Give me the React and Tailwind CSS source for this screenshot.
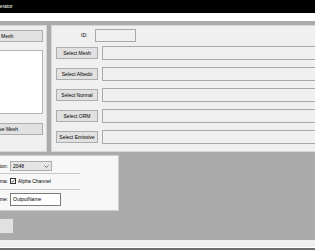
import React from 'react'

function WinButton({ children, className = '' }) {
  return (
    <div className={`flex items-center justify-center bg-[#e1e1e1] border border-[#adadad] whitespace-nowrap ${className}`}>
      {children}
    </div>
  )
}

function App() {
  const rows = ['Select Mesh', 'Select Albedo', 'Select Normal', 'Select ORM', 'Select Emissive']

  return (
    <div className="w-[315px] h-[250px] overflow-hidden bg-white text-[5px] leading-none text-black font-['Liberation_Sans',Arial,sans-serif]">
      <div className="-ml-[43px] w-[378px] h-full flex flex-col">
        <div className="h-[13px] bg-black text-white flex items-center pl-[14px] whitespace-nowrap">Material Generator</div>
        <div className="h-[8px] bg-white" />

        <div className="h-[219px] bg-[#ababab] pt-[4px] flex flex-col">
          <div className="flex gap-[4px] h-[127px]">
            <div className="w-[90px] bg-[#f0f0f0] border border-[#d7d7d7] flex flex-col pl-[3px] pt-[4px]">
              <WinButton className="w-[82px] h-[12px]">Add Mesh</WinButton>
              <div className="w-[82px] h-[64px] mt-[8px] bg-white border border-[#b4b4b4]" />
              <WinButton className="w-[82px] h-[12px] mt-[9px]">Remove Mesh</WinButton>
            </div>

            <div className="flex-1 bg-[#f0f0f0] border border-[#d7d7d7] flex flex-col pl-[4px] pt-[3px]">
              <div className="flex items-center h-[13px] pl-[25px]">
                <span className="w-[14px]">ID:</span>
                <div className="w-[41px] h-[13px] bg-[#f0f0f0] border border-[#a9a9a9]" />
              </div>
              <div className="flex flex-col gap-[7px] mt-[4px]">
                {rows.map((r) => (
                  <div key={r} className="flex items-center gap-[4px] h-[14px]">
                    <WinButton className="w-[42px] h-[12px]">{r}</WinButton>
                    <div className="flex-1 h-[14px] bg-[#f0f0f0] border border-[#a9a9a9] border-r-0" />
                  </div>
                ))}
              </div>
            </div>
          </div>

          <div className="w-[162px] h-[56px] mt-[3px] bg-[#f7f7f7] border border-[#d0d0d0] flex flex-col pt-[5px]">
            <div className="flex items-center h-[10px]">
              <span className="w-[51px] text-right pr-[1px]">Resolution:</span>
              <div className="ml-[1px] w-[42px] h-[10px] bg-[#e5e5e5] border border-[#acacac] flex items-center justify-between px-[2px]">
                <span>2048</span>
                <svg width="5" height="3" viewBox="0 0 5 3">
                  <path d="M0.5 0.5 L2.5 2.5 L4.5 0.5" fill="none" stroke="#555" strokeWidth="0.8" />
                </svg>
              </div>
            </div>
            <div className="ml-[4px] w-[118px] h-px bg-[#c8c8c8] mt-[2px]" />
            <div className="flex items-center h-[6px] mt-[4px]">
              <span className="w-[51px] text-right pr-[1px]">Schema:</span>
              <div className="ml-[1px] w-[6px] h-[6px] bg-white border border-[#333] flex items-center justify-center">
                <svg width="4" height="4" viewBox="0 0 4 4">
                  <path d="M0.5 2 L1.6 3.2 L3.6 0.6" fill="none" stroke="#222" strokeWidth="0.7" />
                </svg>
              </div>
              <span className="ml-[2px]">Alpha Channel</span>
            </div>
            <div className="ml-[4px] w-[118px] h-px bg-[#c8c8c8] mt-[5px]" />
            <div className="flex items-center h-[13px] mt-[3px]">
              <span className="w-[51px] text-right pr-[1px]">Name:</span>
              <div className="ml-[1px] w-[51px] h-[13px] bg-white border border-[#7a7a7a] flex items-center pl-[2px]">OutputName</div>
            </div>
          </div>

          <WinButton className="w-[53px] h-[16px] mt-[7px] ml-[4px]">Generate</WinButton>
        </div>

        <div className="h-[7px] bg-[#f0f0f0]" />
        <div className="h-px bg-white" />
        <div className="h-[2px] bg-[#6e6e6e]" />
      </div>
    </div>
  )
}

export default App
